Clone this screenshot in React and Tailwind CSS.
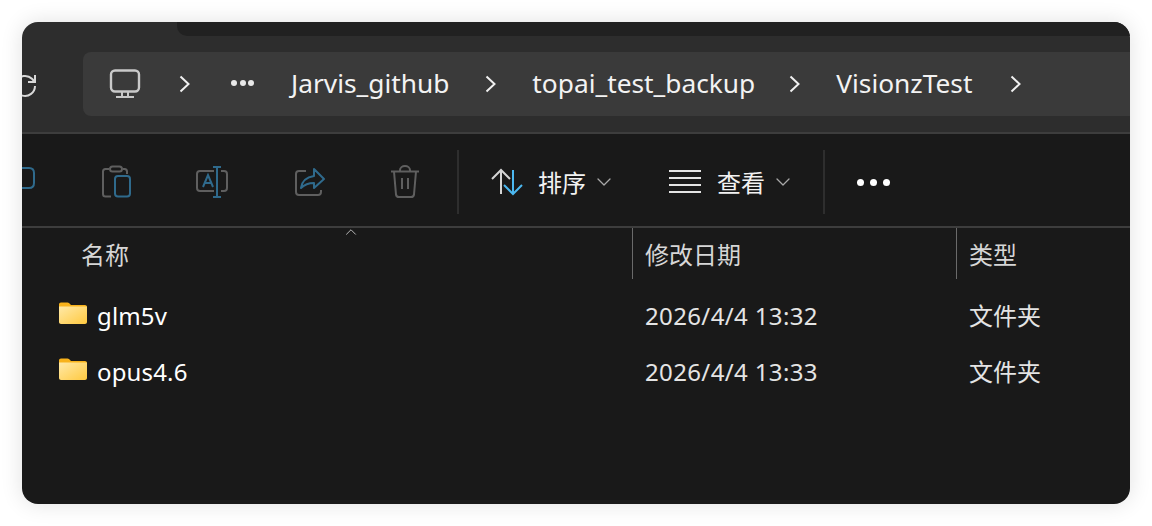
import { ChevronDown, ChevronUp } from "lucide-react";

const fontStack = {
  fontFamily: '"Noto Sans", "Noto Sans CJK SC", sans-serif',
};

function FolderIcon() {
  return (
    <svg width="30" height="24" viewBox="0 0 30 24" className="shrink-0">
      <defs>
        <linearGradient id="folderFill" x1="0" y1="0" x2="1" y2="1">
          <stop offset="0" stopColor="#ffe9a8" />
          <stop offset="1" stopColor="#ffc93f" />
        </linearGradient>
      </defs>
      <path d="M1 3.5C1 2.4 1.8 1.5 3 1.5h6.5c.6 0 1.1.2 1.5.6L13 4h14c1.1 0 2 .9 2 2v3H1z" fill="#f8b21b" />
      <path d="M1 5.5h28V21c0 1.1-.9 2-2 2H3c-1.1 0-2-.9-2-2z" fill="url(#folderFill)" />
    </svg>
  );
}

function Crumb({ children }) {
  return <span className="text-[26.3px] leading-none text-[#f3f3f3] whitespace-nowrap">{children}</span>;
}

function CrumbChevron({ className }) {
  return (
    <svg width="11" height="18" viewBox="0 0 11 18" fill="none" stroke="#f0f0f0" strokeWidth="2" className={`shrink-0 ${className}`}>
      <path d="M1.500 1.500L9.500 9L1.500 16.500" />
    </svg>
  );
}

function AddressBar() {
  return (
    <div className="h-[96px] bg-[#2d2d2d] border-b-2 border-[#3d3d3d] box-content flex">
      <div className="w-[61px] shrink-0 flex items-center relative overflow-hidden">
        {/* refresh, cut off by the window edge */}
        <svg width="30" height="30" viewBox="0 0 30 30" fill="none" stroke="#d8d8d8" strokeWidth="2" className="-ml-[12px] mt-[3px]">
          <path d="M25 15a10 10 0 1 1-3-7.200L25 11" />
          <path d="M25 4v7h-7" />
        </svg>
      </div>
      <div className="flex-1 flex flex-col pt-[16px]">
        <div className="h-[64px] rounded-l-[8px] bg-[#3a3a3a] flex items-center">
          <svg width="32" height="30" viewBox="0 0 32 30" fill="none" stroke="#c9c9c9" strokeWidth="2.4" className="ml-[26px] shrink-0">
            <rect x="2" y="1.5" width="28" height="21" rx="4" />
            <path d="M11 28h10M13 23v5M19 23v5" strokeWidth="2" />
            <path d="M7 28h18" strokeWidth="2" />
          </svg>
          <CrumbChevron className="ml-[38px]" />
          <span className="ml-[41px] flex gap-[2.5px] shrink-0 -mt-[3px]">
            <i className="block size-[6px] rounded-full bg-[#e8e8e8]" />
            <i className="block size-[6px] rounded-full bg-[#e8e8e8]" />
            <i className="block size-[6px] rounded-full bg-[#e8e8e8]" />
          </span>
          <span className="ml-[37px]"><Crumb>Jarvis_github</Crumb></span>
          <CrumbChevron className="ml-[36px]" />
          <span className="ml-[36px]"><Crumb>topai_test_backup</Crumb></span>
          <CrumbChevron className="ml-[34px]" />
          <span className="ml-[36px]"><Crumb>VisionzTest</Crumb></span>
          <CrumbChevron className="ml-[38px]" />
        </div>
      </div>
    </div>
  );
}

const dim = "#5f5f5f";
const blue = "#2f6a8c";

function Toolbar() {
  return (
    <div className="h-[89px] pt-[3px] bg-[#191919] border-b-2 border-[#3d3d3d] box-content flex items-center">
      <svg width="14" height="32" viewBox="0 0 14 32" fill="none" stroke={blue} strokeWidth="2" className="shrink-0 -mt-[4px]">
        <path d="M-4 4h11c3 0 5 2 5 5v10c0 3-2 5-5 5H-4" />
      </svg>
      <svg width="32" height="34" viewBox="0 0 32 34" fill="none" strokeWidth="2" className="ml-[65px] shrink-0">
        <path d="M8 4H4.500C3 4 2 5 2 6.500V29c0 1.500 1 2.500 2.500 2.500H10" stroke={dim} />
        <path d="M22 4h1.500C25 4 26 5 26 6.500V9" stroke={dim} />
        <rect x="9" y="1.500" width="12" height="5" rx="2.500" stroke={dim} />
        <rect x="14" y="11" width="15" height="20.500" rx="3" stroke={blue} />
      </svg>
      <svg width="34" height="34" viewBox="0 0 34 34" fill="none" strokeWidth="2" className="ml-[62px] shrink-0">
        <path d="M19 6H5C3 6 2 7.500 2 9v14c0 1.500 1 3 3 3h14" stroke={dim} />
        <path d="M26 6h3c2 0 3 1.500 3 3v14c0 1.500-1 3-3 3h-3" stroke={dim} />
        <path d="M18 2h8M22 2v30M18 32h8M8 22l5-12 5 12M9.500 18h7" stroke={blue} />
      </svg>
      <svg width="32" height="32" viewBox="0 0 32 32" fill="none" strokeWidth="2" className="ml-[65px] shrink-0">
        <path d="M12 5H5C3 5 2 6.500 2 8v18c0 2 1 3 3 3h19c2 0 3-1 3-3v-2" stroke={dim} />
        <path d="M20 3l10 10-10 9v-5c-6 0-9 1-13 5 1-7 6-11 13-12z" stroke={blue} strokeLinejoin="round" />
      </svg>
      <svg width="32" height="34" viewBox="0 0 32 34" fill="none" stroke={dim} strokeWidth="2" className="ml-[63px] shrink-0">
        <path d="M2 6.500h28M11 6.500V5a5 4 0 0 1 10 0v1.500M5 6.500l2 23c.2 1.500 1 2.500 3 2.500h12c2 0 2.800-1 3-2.500l2-23M13 13v11M19 13v11" />
      </svg>
      <div className="ml-[36px] w-[2px] h-[64px] bg-[#2e2e2e] shrink-0" />

      <svg width="34" height="28" viewBox="0 0 34 28" fill="none" strokeWidth="2" className="ml-[31px] shrink-0">
        <path d="M11 26V2M2 11l9-9 9 9" stroke="#d4d4d4" />
        <path d="M23 2v24M14 17l9 9 9-9" stroke="#4cb8f0" />
      </svg>
      <span className="ml-[14px] pt-[2px] text-[24px] leading-none text-[#f2f2f2]">排序</span>
      <ChevronDown size={24} strokeWidth={1.300} className="ml-[6px] text-[#a8a8a8] shrink-0" />
      <span className="ml-[53px] flex flex-col gap-[5px] w-[32px] shrink-0">
        <i className="block h-[2px] bg-[#e4e4e4]" />
        <i className="block h-[2px] bg-[#e4e4e4]" />
        <i className="block h-[2px] bg-[#e4e4e4]" />
        <i className="block h-[2px] bg-[#e4e4e4]" />
      </span>
      <span className="ml-[16px] pt-[2px] text-[24px] leading-none text-[#f2f2f2]">查看</span>
      <ChevronDown size={24} strokeWidth={1.300} className="ml-[6px] text-[#a8a8a8] shrink-0" />
      <div className="ml-[28px] w-[2px] h-[64px] bg-[#2e2e2e] shrink-0" />
      <span className="ml-[32px] mt-[1px] flex gap-[6px] shrink-0">
        <i className="block size-[7px] rounded-full bg-white" />
        <i className="block size-[7px] rounded-full bg-white" />
        <i className="block size-[7px] rounded-full bg-white" />
      </span>
    </div>
  );
}

const rows = [
  { name: "glm5v", date: "2026/4/4 13:32", type: "文件夹" },
  { name: "opus4.6", date: "2026/4/4 13:33", type: "文件夹" },
];

function FileTable() {
  return (
    <div className="flex-1 bg-[#191919]">
      <div className="h-[51px] flex text-[24px] leading-none text-[#d6d6d6] relative">
        <ChevronUp size={18} strokeWidth={1.2} className="absolute left-[320px] -top-[5px] text-[#c8c8c8]" />
        <div className="w-[610px] pl-[59px] pt-[15px]">名称</div>
        <div className="w-[324px] border-l border-[#6a6a6a] pl-[12px] pt-[15px]">修改日期</div>
        <div className="flex-1 border-l border-[#6a6a6a] pl-[12px] pt-[15px]">类型</div>
      </div>
      <div className="pt-[9px]">
        {rows.map((row) => (
          <div key={row.name} className="h-[56px] flex items-center text-[24px] leading-none">
            <div className="w-[610px] pl-[36px] flex items-center">
              <span className="-mt-[6px]"><FolderIcon /></span>
              <span className="ml-[9px] text-white tracking-[0.15px]">{row.name}</span>
            </div>
            <div className="w-[324px] pl-[13px] text-[#e4e4e4] tracking-[0.36px]">{row.date}</div>
            <div className="flex-1 pl-[13px] text-[#e4e4e4]">{row.type}</div>
          </div>
        ))}
      </div>
    </div>
  );
}

export default function App() {
  return (
    <div className="w-[1152px] h-[526px] bg-white p-[22px]" style={fontStack}>
      <div className="w-[1108px] h-[482px] rounded-[16px] overflow-hidden flex flex-col shadow-[0_0_22px_rgba(0,0,0,0.12)]">
        <div className="h-[14px] bg-[#2d2d2d] shrink-0 pl-[155px]">
          <div className="h-full bg-[#212121] rounded-bl-[10px]" />
        </div>
        <AddressBar />
        <Toolbar />
        <FileTable />
      </div>
    </div>
  );
}
